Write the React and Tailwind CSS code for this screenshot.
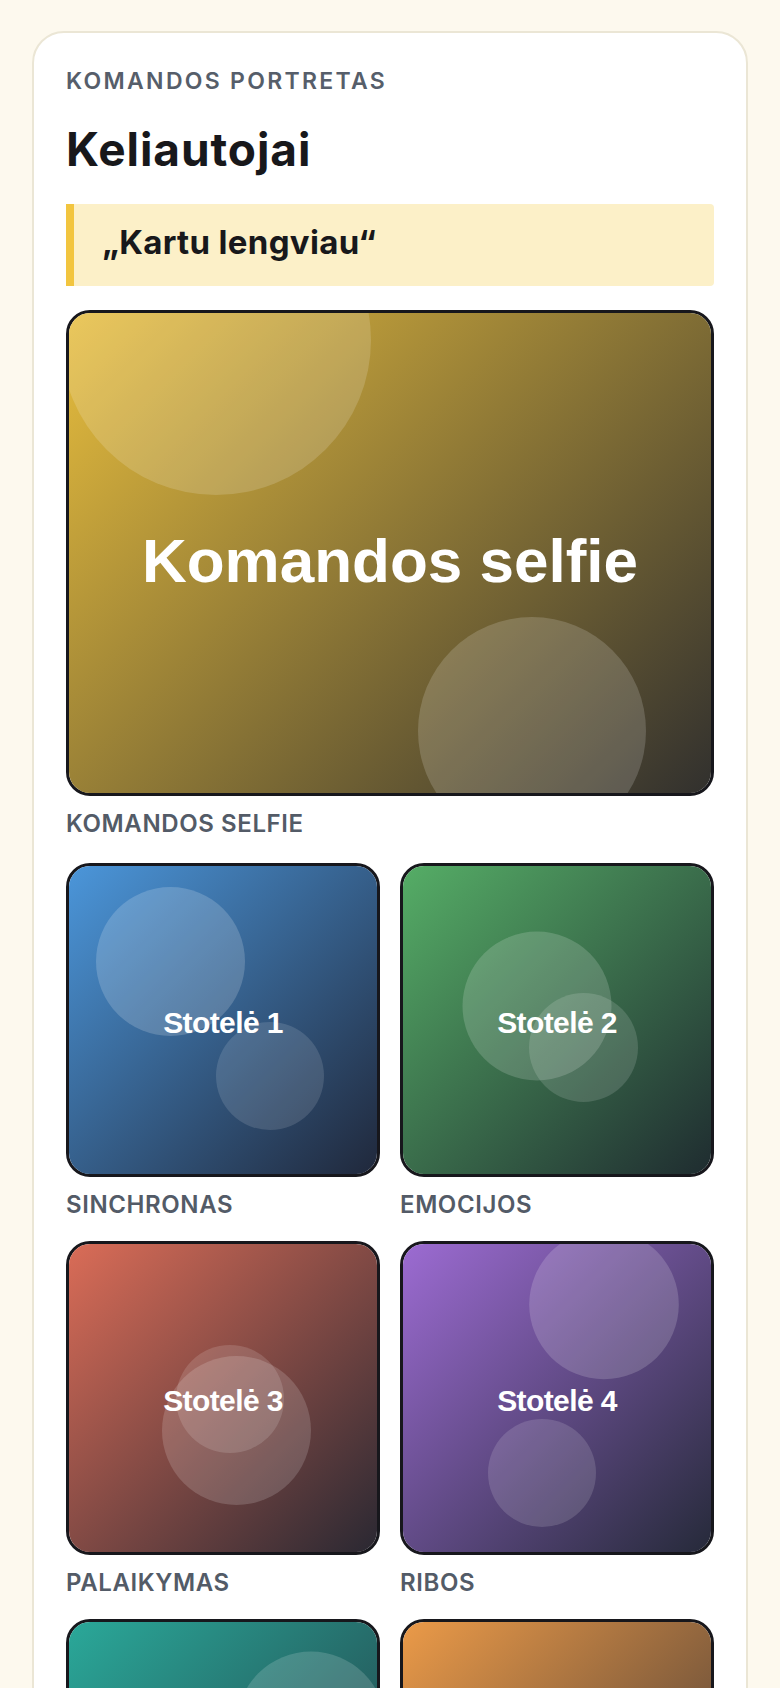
import React from "react";

const FONT = { fontFamily: "Inter, 'Noto Sans', 'Liberation Sans', sans-serif" };

function Art({ id, w, h, from, to, circles, text, fontSize, baseline, spacing = 0 }) {
  const d = (w + h) / 2;
  return (
    <svg viewBox={`0 0 ${w} ${h}`} className="block h-full w-full">
      <defs>
        <linearGradient id={id} gradientUnits="userSpaceOnUse" x1="0" y1="0" x2={d} y2={d}>
          <stop offset="0" stopColor={from} />
          <stop offset="1" stopColor={to} />
        </linearGradient>
      </defs>
      <rect x="0" y="0" width={w} height={h} fill={`url(#${id})`} />
      {circles.map((c, i) => (
        <circle key={i} cx={c[0]} cy={c[1]} r={c[2]} fill="#ffffff" fillOpacity={c[3] ?? 0.16} />
      ))}
      <text
        x={w / 2}
        y={baseline}
        textAnchor="middle"
        fill="#ffffff"
        fontFamily="'Liberation Sans', Arial, sans-serif"
        fontWeight="700"
        fontSize={fontSize}
        letterSpacing={spacing}
      >
        {text}
      </text>
    </svg>
  );
}

const tiles = [
  {
    id: "g1",
    label: "Sinchronas",
    text: "Stotelė 1",
    from: "#4b96da",
    to: "#20283b",
    circles: [
      [101.5, 95.5, 74.5, 0.18],
      [201, 210, 54, 0.13],
    ],
  },
  {
    id: "g2",
    label: "Emocijos",
    text: "Stotelė 2",
    from: "#55ad66",
    to: "#1f2c30",
    circles: [
      [134, 140, 74.5, 0.17],
      [180.5, 181.5, 54.5, 0.14],
    ],
  },
  {
    id: "g3",
    label: "Palaikymas",
    text: "Stotelė 3",
    from: "#da6c57",
    to: "#2a2832",
    circles: [
      [167.5, 186.5, 74.5, 0.16],
      [161, 155, 54, 0.14],
    ],
  },
  {
    id: "g4",
    label: "Ribos",
    text: "Stotelė 4",
    from: "#9c6bd2",
    to: "#262a3a",
    circles: [
      [201, 60.5, 74.8, 0.17],
      [139, 229, 54, 0.14],
    ],
  },
  {
    id: "g5",
    label: "Pasitikėjimas",
    text: "Stotelė 5",
    from: "#2aa899",
    to: "#22353f",
    circles: [
      [242, 104, 74.5, 0.16],
      [90, 230, 54, 0.13],
    ],
  },
  {
    id: "g6",
    label: "Tikslas",
    text: "Stotelė 6",
    from: "#eb9a48",
    to: "#3a3334",
    circles: [
      [70, 250, 74.5, 0.14],
      [230, 260, 54, 0.13],
    ],
  },
];

function Caption({ children }) {
  return (
    <figcaption className="mt-3 text-[24px] font-semibold uppercase leading-[32px] tracking-[0.025em] text-[#535b67]">
      {children}
    </figcaption>
  );
}

export default function App() {
  return (
    <div className="min-h-screen bg-[#fdf9ee] px-8 pb-8 pt-[31px]" style={FONT}>
      <div className="rounded-[32px] border-2 border-[#ebe6d5] bg-white px-8 pb-10 pt-8">
        <p className="text-[23px] font-semibold uppercase leading-[32px] tracking-[0.1em] text-[#565e6a]">
          Komandos portretas
        </p>
        <h1 className="mt-[25px] text-[46px] font-bold leading-[55px] tracking-[0.02em] text-[#18181b]">
          Keliautojai
        </h1>
        <blockquote className="mt-[27px] rounded-r border-l-8 border-[#f2c53f] bg-[#fcf0c8] pb-6 pl-7 pt-[18px] text-[33px] font-bold leading-[40px] tracking-[0.01em] text-[#18181b]">
          „Kartu lengviau“
        </blockquote>

        <figure className="mt-6">
          <div className="aspect-[4/3] overflow-hidden rounded-[24px] border-[3px] border-[#17171c]">
            <Art
              id="gmain"
              w={642}
              h={480}
              from="#e7bd3d"
              to="#31302e"
              circles={[
                [147, 27, 155, 0.16],
                [463, 418, 114, 0.17],
              ]}
              text="Komandos selfie"
              fontSize={62}
              baseline={269}
            />
          </div>
          <Caption>Komandos selfie</Caption>
        </figure>

        <div className="mt-[23px] grid grid-cols-2 gap-5">
          {tiles.map((t) => (
            <figure key={t.id}>
              <div className="aspect-square overflow-hidden rounded-[24px] border-[3px] border-[#17171c]">
                <Art
                  id={t.id}
                  w={308}
                  h={308}
                  from={t.from}
                  to={t.to}
                  circles={t.circles}
                  text={t.text}
                  fontSize={30}
                  baseline={166.7}
                  spacing={-0.6}
                />
              </div>
              <Caption>{t.label}</Caption>
            </figure>
          ))}
        </div>
      </div>
    </div>
  );
}
